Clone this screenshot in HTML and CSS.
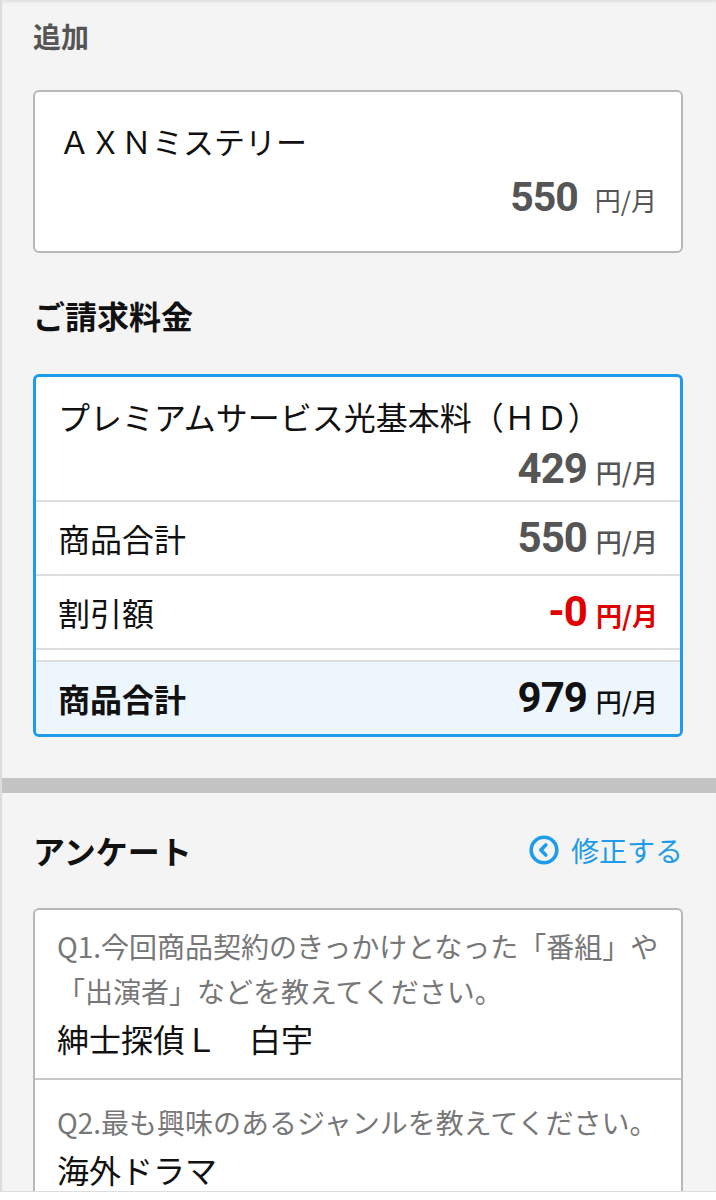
FILE: index.html
```html
<!DOCTYPE html>
<html lang="ja">
<head>
    <meta charset="UTF-8">
    <meta name="viewport" content="width=device-width, initial-scale=1.0">
    <title>ご注文内容の確認</title>
    <link rel="stylesheet" href="styles.css">
</head>
<body>
    <div class="page">
        <!-- 追加チャンネル -->
        <div class="section">
            <div class="sub-title">追加</div>
            <div class="card">
                <div class="item-name">ＡＸＮミステリー</div>
                <div class="price item-price">
                    <span class="num">550</span><span class="unit">円/月</span>
                </div>
            </div>
        </div>

        <!-- ご請求料金 -->
        <div class="section section-bill">
            <div class="title">ご請求料金</div>
            <div class="bill">
                <div class="bill-row bill-row-stack">
                    <div class="label">プレミアムサービス光基本料（ＨＤ）</div>
                    <div class="price"><span class="num">429</span><span class="unit">円/月</span></div>
                </div>
                <div class="bill-row">
                    <div class="label">商品合計</div>
                    <div class="price"><span class="num">550</span><span class="unit">円/月</span></div>
                </div>
                <div class="bill-row">
                    <div class="label">割引額</div>
                    <div class="price price-red"><span class="num">-0</span><span class="unit">円/月</span></div>
                </div>
                <div class="bill-row bill-total">
                    <div class="label">商品合計</div>
                    <div class="price"><span class="num">979</span><span class="unit">円/月</span></div>
                </div>
            </div>
        </div>

        <div class="band"></div>

        <!-- アンケート -->
        <div class="section section-survey">
            <div class="title-row">
                <div class="title">アンケート</div>
                <a class="edit-link" href="#">
                    <svg width="30" height="30" viewBox="0 0 30 30">
                        <circle cx="15" cy="15" r="12.8" fill="none" stroke="#1e9be9" stroke-width="3.6"/>
                        <path d="M16.8 10 L11.8 15 L16.8 20" fill="none" stroke="#1e9be9" stroke-width="3.6" stroke-linecap="round" stroke-linejoin="round"/>
                    </svg>
                    修正する
                </a>
            </div>
            <div class="survey">
                <div class="q-item">
                    <div class="question">Q1.今回商品契約のきっかけとなった「番組」や「出演者」などを教えてください。</div>
                    <div class="answer">紳士探偵Ｌ　白宇</div>
                </div>
                <div class="q-item">
                    <div class="question">Q2.最も興味のあるジャンルを教えてください。</div>
                    <div class="answer">海外ドラマ</div>
                </div>
            </div>
        </div>
    </div>

    <!-- 下部バー -->
    <div class="bottom-bar"></div>
</body>
</html>
```

FILE: styles.css
```css
body {
    margin: 0;
    background-color: #f4f4f4;
    font-family: "Noto Sans CJK JP", "Noto Sans", sans-serif;
    color: #111111;
}
.page {
    border-left: 2px solid #dcdcdc;
    box-shadow: inset 0 4px 4px -3px #d6d6d6;
}
.section {
    padding: 15px 33px 0 31px;
}
.sub-title {
    font-size: 28px;
    line-height: 42px;
    font-weight: bold;
    color: #555555;
}
.title {
    font-size: 32px;
    line-height: 44px;
    font-weight: bold;
    color: #111111;
}

/* 金額表示 */
.price {
    display: flex;
    align-items: baseline;
    justify-content: flex-end;
    height: 50px;
    color: #555555;
    white-space: nowrap;
}
.price .num {
    font-family: Roboto, "Liberation Sans", sans-serif;
    font-weight: bold;
    font-size: 42px;
    line-height: 50px;
    letter-spacing: -1px;
}
.price .unit {
    font-size: 26px;
    line-height: 1;
    font-weight: 500;
    margin-left: 9px;
}

/* 追加カード */
.card {
    margin-top: 33px;
    background-color: #ffffff;
    border: 2px solid #b8b8b8;
    border-radius: 6px;
    padding: 29px 24px 29px 24px;
}
.item-name {
    font-size: 31px;
    line-height: 40px;
}
.item-price {
    margin-top: 11px;
}
.item-price .num {
    font-size: 41px;
}
.item-price .unit {
    font-weight: normal;
    margin-left: 17px;
}

/* ご請求料金 */
.section-bill {
    padding-top: 40px;
    padding-bottom: 41px;
}
.bill {
    margin-top: 37px;
    background-color: #ffffff;
    border: 3px solid #1e9be9;
    border-radius: 6px;
    overflow: hidden;
}
.bill-row {
    display: flex;
    justify-content: space-between;
    align-items: center;
    padding: 11px 22px;
    border-bottom: 2px solid #dddddd;
}
.bill-row-stack {
    display: block;
    padding-top: 17px;
    padding-bottom: 6px;
}
.bill-row-stack .price {
    margin-top: 6px;
}
.label {
    font-size: 32px;
    line-height: 44px;
}
.price-red {
    color: #e00000;
}
.price-red .unit {
    font-weight: bold;
}
.bill-total {
    margin-top: 10px;
    border-top: 2px solid #dddddd;
    border-bottom: none;
    background-color: #eef6fd;
}
.bill-total .label {
    font-weight: bold;
}
.bill-total .price {
    color: #111111;
}

.band {
    height: 15px;
    background-color: #c4c4c4;
}

/* アンケート */
.section-survey {
    padding-top: 35px;
}
.title-row {
    display: flex;
    justify-content: space-between;
    align-items: center;
}
.edit-link {
    display: flex;
    align-items: center;
    gap: 12px;
    color: #1e9be9;
    font-size: 28px;
    text-decoration: none;
}
.survey {
    margin-top: 36px;
    background-color: #ffffff;
    border: 2px solid #b8b8b8;
    border-bottom: none;
    border-radius: 6px 6px 0 0;
}
.q-item {
    padding: 20px 22px 18px 22px;
    border-bottom: 2px solid #c8c8c8;
}
.q-item:first-child {
    padding-top: 14px;
}
.q-item:last-child {
    padding-bottom: 0;
    border-bottom: none;
}
.question {
    font-size: 28px;
    line-height: 45px;
    color: #777777;
}
.answer {
    margin-top: 2px;
    font-size: 32px;
    line-height: 44px;
}
.bottom-bar {
    position: fixed;
    left: 0;
    right: 0;
    bottom: 0;
    height: 8px;
    background-color: #ffffff;
    border-top: 1px solid #dddddd;
}
```
